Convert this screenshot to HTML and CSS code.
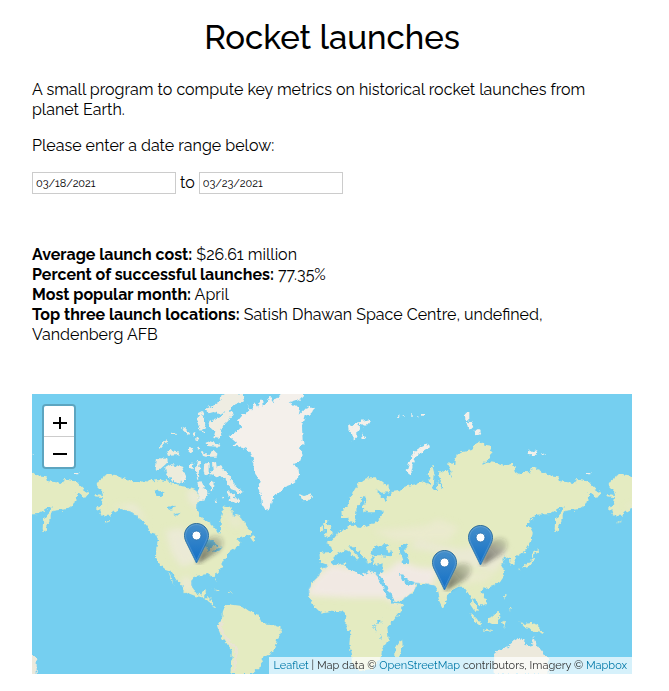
FILE: index.html
```html
<!DOCTYPE html>
<html lang="en">
<head>
<meta charset="utf-8">
<meta name="viewport" content="width=device-width, initial-scale=1">
<title>Rocket launches</title>
<link rel="stylesheet" href="styles.css">
</head>
<body>
<main class="page">
  <h1 class="title">Rocket launches</h1>
  <p class="text">A small program to compute key metrics on historical rocket launches from planet Earth.</p>
  <p class="text">Please enter a date range below:</p>
  <form class="range">
    <input class="date" type="text" aria-label="Start date" value="03/18/2021">
    <span>to</span>
    <input class="date" type="text" aria-label="End date" value="03/23/2021">
  </form>
  <section class="metrics">
    <div><b>Average launch cost:</b> $26.61 million</div>
    <div><b>Percent of successful launches:</b> 77.35%</div>
    <div><b>Most popular month:</b> April</div>
    <div><b>Top three launch locations:</b> Satish Dhawan Space Centre, undefined, Vandenberg AFB</div>
  </section>
  <section class="map" aria-label="Launch map">
    <svg class="world" viewBox="0 0 1800 840" preserveAspectRatio="xMidYMid slice" aria-hidden="true">
      <defs>
        <filter id="soft" x="-20%" y="-20%" width="140%" height="140%"><feGaussianBlur stdDeviation="9"/></filter>
        <filter id="rough" x="0" y="0" width="100%" height="100%" color-interpolation-filters="sRGB"><feTurbulence type="fractalNoise" baseFrequency="0.08" numOctaves="3" seed="4"/><feDisplacementMap in="SourceGraphic" scale="16" xChannelSelector="R" yChannelSelector="G"/></filter>
        <clipPath id="eurasia-clip"><use href="#eurasia-shape"/></clipPath>
        <clipPath id="america-clip"><use href="#america-shape"/></clipPath>
        <path id="america-shape" d="M187 300L213 303 210 295 192 275 205 255 230 242 262 248 290 257 320 268 330 262 340 268 355 255 362 262 385 257 405 262 430 268 450 280 470 282 495 290 502 320 495 330 495 350 505 368 520 378 540 392 550 405 562 422 567 400 565 380 572 365 572 345 568 335 588 340 602 352 602 365 612 360 622 363 630 378 640 388 648 405 660 412 655 422 630 428 612 440 625 440 622 455 605 465 588 478 582 490 574 500 570 515 562 528 550 540 548 550 556 565 552 560 542 546 525 540 508 543 490 545 480 558 481 580 493 598 508 602 512 592 526 588 520 602 514 612 542 614 543 632 552 642 540 636 530 622 512 610 490 606 460 594 450 575 438 560 420 535 400 528 384 515 372 490 373 460 378 440 372 420 355 415 345 395 325 375 300 357 280 348 262 345 245 355 235 365 217 365 205 360 208 353 195 345 210 325 213 310 190 307Z"/>
        <path id="eurasia-shape" d="M928 350L945 340 952 320 960 300 972 280 982 268 1005 250 1028 250 1050 262 1073 280 1072 295 1050 297 1034 286 1042 304 1054 314 1058 325 1065 310 1076 305 1080 294 1104 290 1118 278 1140 272 1160 268 1172 262 1182 270 1195 272 1190 238 1202 215 1208 240 1204 290 1216 290 1214 262 1222 265 1232 285 1238 282 1226 262 1218 235 1230 235 1245 225 1258 255 1258 232 1245 208 1270 210 1272 185 1290 172 1320 165 1340 140 1355 152 1375 155 1382 170 1370 195 1350 213 1370 205 1400 208 1425 215 1440 208 1448 220 1455 243 1472 234 1495 235 1500 220 1525 228 1545 243 1580 247 1585 262 1630 268 1635 255 1665 262 1688 285 1707 298 1695 312 1675 295 1668 310 1663 330 1640 345 1600 350 1592 362 1592 375 1572 415 1568 402 1570 375 1592 348 1595 340 1585 342 1555 360 1510 362 1490 385 1482 398 1494 400 1502 415 1498 440 1480 470 1460 485 1448 483 1448 512 1436 512 1434 495 1424 490 1420 486 1410 495 1414 506 1405 510 1414 525 1417 545 1404 565 1382 577 1360 582 1348 590 1352 602 1365 620 1363 630 1345 636 1330 618 1320 612 1326 625 1338 650 1330 650 1318 632 1316 610 1305 592 1295 578 1280 578 1266 585 1245 604 1244 622 1232 642 1222 622 1215 592 1213 580 1204 574 1185 568 1150 567 1140 564 1152 574 1147 588 1132 602 1105 620 1086 624 1090 630 1114 630 1108 648 1084 680 1066 700 1070 738 1050 765 1047 790 1020 825 980 832 960 800 952 750 955 720 940 690 943 662 930 652 900 650 866 656 845 635 832 610 830 585 845 562 862 545 868 525 890 514 865 505 862 476 900 474 898 456 883 446 900 440 918 418 940 405 948 396 965 395 990 400 1030 386 1048 370 1052 350 1034 346 1028 355 1010 355 994 352 992 335 1006 318 1002 302 988 308 986 326 974 340 972 368 962 388 952 384 948 368 930 370Z"/>
        <path id="south" d="M570 670L575 643 590 630 602 632 630 636 650 650 678 662 690 688 715 690 742 700 750 712 735 735 730 765 715 778 695 788 685 818 660 840 595 840 600 768 585 750 568 728 555 695Z"/>
        <g id="eurasia">
          <g filter="url(#rough)">
            <use href="#eurasia-shape" fill="#e4ebc1"/>
          </g>
          <g clip-path="url(#eurasia-clip)">
            <g filter="url(#soft)">
              <path fill="#f1e9e3" d="M820 605L850 550 900 510 940 520 1060 535 1100 500 1160 520 1220 525 1200 575 1140 615 1090 630 1060 612 960 612Z"/>
              <path fill="#efe8df" d="M1130 460L1210 475 1250 500 1390 535 1430 470 1370 450 1290 465 1160 440Z" opacity=".6"/>
              <path fill="#ece9d3" d="M1020 410L1180 395 1220 375 1280 400 1250 440 1090 440ZM1300 530L1390 540 1360 560 1290 570ZM1210 560L1240 570 1240 620Z" opacity=".7"/>
            </g>
          </g>
          <g filter="url(#rough)" fill="#75cff0">
            <path d="M898 508L910 482 940 467 950 472 964 486 975 500 978 488 961 470 948 455 958 454 980 474 995 490 1008 506 1020 500 1016 486 1032 490 1020 506 1024 514 1055 508 1054 530 1040 542 1012 532 990 544 975 535 945 526 938 508 905 514Z"/>
            <path d="M1018 484L1022 464 1036 452 1048 460 1058 450 1072 452 1062 466 1080 478 1076 487 1050 484 1036 484Z"/>
            <path d="M1100 460L1122 448 1128 454 1118 472 1128 486 1132 506 1114 508 1108 490Z"/>
            <path d="M1033 540L1042 542 1064 575 1084 610 1088 625 1112 626 1114 632 1086 630 1070 615 1050 575Z"/>
            <path d="M1103 540L1112 542 1122 556 1148 564 1144 572 1126 572 1112 560Z"/>
            <path d="M1036 680L1048 674 1048 686 1036 690ZM1024 690L1032 712 1034 716 1024 700ZM1046 716L1050 738 1044 732Z"/>
          </g>
          <g filter="url(#rough)" fill="#e4ebc1">
            <path d="M878 378L886 378 884 390 896 402 904 420 890 428 876 424 884 412 876 398ZM864 398L872 394 874 412 864 418Z"/>
            <path d="M1110 735L1112 752 1102 790 1090 788 1090 762Z"/>
            <path d="M1312 656L1330 668 1346 690 1348 698 1332 686ZM1368 672L1384 665 1400 652 1402 668 1396 690 1380 690 1368 684ZM1352 706L1382 711 1382 714 1352 709ZM1410 684L1422 680 1416 700ZM1416 600L1422 602 1418 618ZM1432 642L1438 642 1434 650Z"/>
            <path d="M1470 520L1484 508 1498 500 1504 472 1516 466 1518 474 1508 480 1502 506 1492 516 1474 522ZM1456 524L1464 524 1460 532Z"/>
            <path d="M1462 682L1476 690 1500 686 1520 698 1536 718 1520 712 1508 718 1492 702 1476 698Z"/>
          </g>
          <g filter="url(#rough)">
            <path fill="#ece9dc" d="M1388 840L1386 780 1400 768 1426 760 1444 742 1460 732 1478 736 1476 748 1494 758 1502 746 1506 728 1514 752 1530 772 1550 798 1550 840Z"/>
            <path fill="#f3f0ea" d="M948 92L962 100 972 86 980 84 984 98 976 110 976 128 966 140 960 120 950 108ZM980 82L1010 76 1014 86 1002 98 986 92ZM990 118L1000 132 992 134ZM1190 148L1194 160 1160 180 1150 192 1142 214 1138 234 1140 244 1124 232 1130 212 1140 182 1160 162ZM1298 56L1312 56 1312 80 1300 76ZM1304 88L1316 80 1324 100 1308 104ZM1328 112L1342 104 1348 118 1330 124ZM1486 166L1500 174 1516 172 1514 182 1492 184ZM1528 178L1542 181 1530 183ZM1098 64H1102V70H1098ZM1112 64H1118V68H1112ZM1138 60H1142V66H1138ZM1156 66H1164V70H1156ZM1170 60H1176V65H1170ZM1665 237H1678V241H1665Z"/>
          </g>
        </g>
        <g id="america">
          <use href="#america-shape" fill="#e4ebc1" filter="url(#rough)"/>
          <g clip-path="url(#america-clip)" filter="url(#soft)">
            <path fill="#eee9de" d="M400 410L450 400 490 460 500 500 450 520 420 480ZM465 285L505 290 500 350 470 320ZM240 335L310 330 350 390 300 350ZM450 550L475 550 480 600 450 580Z" opacity=".7"/>
            <path fill="#ece9d8" d="M575 350L620 370 640 395 600 400Z" opacity=".5"/>
          </g>
          <g filter="url(#rough)">
            <use href="#south" fill="#e4ebc1"/>
            <path fill="#75cff0" d="M366 294L382 288 398 296 384 310 370 304ZM404 340L432 332 422 346 408 348ZM424 362L446 356 432 368ZM520 440L540 438 560 454 556 458 542 452 534 470 526 474ZM544 466L572 460 562 470 544 474Z"/>
            <path fill="#e4ebc1" d="M654 432L664 422 668 436 660 441ZM408 530L418 552 428 574 414 550ZM538 584L568 592 560 594ZM592 593L604 595 592 597ZM216 388L234 376 230 384Z"/>
            <path fill="none" stroke="#e9e4d3" stroke-width="8" d="M572 680L562 700 590 742 614 764 606 830"/>
            <path fill="#ececdc" d="M372 192L402 194 406 206 384 226 368 230ZM382 158L400 138 402 144 388 162ZM404 174L416 166 430 178 444 172 446 182 408 186ZM420 116H430V122H420ZM400 222L420 210 450 218 458 238 450 258 438 266 420 258 404 240ZM450 242L462 250 458 262 448 258Z"/>
            <path fill="#efede2" d="M518 44L536 38 556 26 568 6 590 -6 632 0 636 22 620 30 600 38 590 52 606 54 598 68 588 82 574 94 566 112 572 126 560 134 544 132 550 112 534 98 546 76 566 66 580 54 562 60 548 54 534 58ZM498 60L510 54 518 74 520 94 512 116 502 106 496 88ZM534 78L548 90 550 102 536 104 530 92ZM524 146L536 142 550 150 564 148 560 158 526 156ZM506 168L518 176 532 180 546 170 556 178 554 188 524 188 510 184ZM450 98L460 102 472 116 468 124 456 112ZM482 118H490V126H482ZM490 130L500 134 498 140 490 136ZM496 160L504 158 504 168 494 166ZM472 156L484 168 476 180 470 170ZM474 206L484 206 482 226 474 222ZM450 232L458 244 462 254 454 266 448 262ZM494 202L504 200 502 222 500 236 502 256 494 250 492 228ZM520 204L530 204 530 238 524 246 518 232ZM540 206L552 204 554 218 568 214 572 226 584 236 594 246 602 258 606 270 618 280 632 294 626 300 612 290 598 286 586 272 578 256 566 244 550 248 540 244 534 250 532 240 542 228ZM496 264L508 262 516 270 514 282 524 288 530 298 522 306 518 318 506 322 498 308 500 290ZM538 260L548 264 546 284 538 290 534 276ZM590 290L602 300 618 318 622 326 612 328 598 320 590 322 592 308 586 300ZM548 316L556 322 550 328ZM570 302L578 310 572 314Z"/>
            <path fill="#f4f0eb" d="M632 60L655 50 640 28 660 50 667 25 675 38 690 12 692 35 705 28 712 8 725 28 732 8 745 18 740 -8H812V12L770 25 805 42 800 62 822 40 848 42 835 60 818 66 810 95 812 140 818 145 803 160 812 180 805 200 790 205 785 215 800 225 802 245 790 262 775 272 755 280 750 292 730 300 720 320 712 345 700 347 690 330 685 300 678 285 686 262 670 240 668 215 658 180 645 165 630 158 605 155 615 145 592 125 615 112 628 100 615 80Z"/>
            <path fill="#efeede" d="M804 300L818 306 836 298 840 310 830 320 812 322 808 312Z"/>
          </g>
        </g>
      </defs>
      <rect width="1800" height="840" fill="#75cff0"/>
      <use href="#eurasia"/>
      <use href="#eurasia" x="-1536"/>
      <use href="#america"/>
      <use href="#america" x="1536"/>
    </svg>

    <svg class="marker marker-us" viewBox="0 0 48 42" role="img" aria-label="Launch site"><use href="#pin"/></svg>
    <svg class="marker marker-china" viewBox="0 0 48 42" role="img" aria-label="Launch site"><use href="#pin"/></svg>
    <svg class="marker marker-india" viewBox="0 0 48 42" role="img" aria-label="Launch site"><use href="#pin"/></svg>
    <svg class="symbols" aria-hidden="true">
      <defs>
        <linearGradient id="pin-blue" x1="0" y1="0" x2="0" y2="1"><stop offset="0" stop-color="#468fca"/><stop offset="1" stop-color="#126fc6"/></linearGradient>
        <linearGradient id="pin-edge" x1="0" y1="0" x2="0" y2="1"><stop offset="0" stop-color="#2e6c97"/><stop offset="1" stop-color="#3883b7"/></linearGradient>
        <linearGradient id="shade-fill" x1="0" y1="1" x2="1" y2="0"><stop offset="0" stop-color="#222" stop-opacity=".65"/><stop offset="1" stop-color="#222" stop-opacity=".1"/></linearGradient>
        <filter id="shade" x="-30%" y="-30%" width="160%" height="160%"><feGaussianBlur stdDeviation="2"/></filter>
        <g id="pin">
          <path d="M13 41L18 22Q27 10 37 14 43 20 34 29Z" fill="url(#shade-fill)" filter="url(#shade)"/>
          <path d="M12.500 .5C5.800 .5 .5 5.900 .5 12.500c0 2.600 .8 4.800 2 7.200L12.500 40l10-20.300c1.200-2.400 2-4.600 2-7.200C24.500 5.900 19.200 .5 12.500 .5Z" fill="url(#pin-blue)" stroke="url(#pin-edge)"/>
          <path d="M12.500 1.600C6.500 1.600 1.600 6.500 1.600 12.500c0 2.400 .7 4.400 1.900 6.700L12.500 37.500l9-18.300c1.200-2.300 1.900-4.300 1.900-6.700C23.400 6.500 18.500 1.600 12.500 1.600Z" fill="none" stroke="#fff" stroke-opacity=".15"/>
          <circle cx="12.500" cy="12.500" r="4.500" fill="#fff" stroke="#2f78b5"/>
        </g>
      </defs>
    </svg>

    <div class="zoom">
      <button class="zoom-button" type="button" aria-label="Zoom in"><svg width="14" height="14" viewBox="0 0 14 14"><path d="M7 1V13M0 7H14"/></svg></button>
      <button class="zoom-button" type="button" aria-label="Zoom out"><svg width="14" height="14" viewBox="0 0 14 14"><path d="M0 7H14"/></svg></button>
    </div>
    <div class="attribution"><a href="#leaflet">Leaflet</a> | Map data © <a href="#osm">OpenStreetMap</a> contributors, Imagery © <a href="#mapbox">Mapbox</a></div>
  </section>
</main>
</body>
</html>
```

FILE: styles.css
```css
body {
  margin: 0;
  background: #fff;
  color: #000;
  font: 16px/20px Raleway, Lato, sans-serif;
}

.page {
  max-width: 600px;
  margin: 0 32px;
  padding: 18px 0;
}

.title {
  margin: 0 0 22px;
  font-size: 33px;
  line-height: 40px;
  font-weight: 500;
  text-align: center;
}

.text {
  margin: 0 0 16px;
}

.range {
  display: flex;
  align-items: center;
  gap: 4px;
}

.date {
  box-sizing: border-box;
  width: 144px;
  height: 22px;
  padding: 0 3px;
  border: 1px solid #ccc;
  background: #fff;
  color: #000;
  font: 11px Raleway, Lato, sans-serif;
}

.metrics {
  margin: 51px 0 49px;
}

.map {
  position: relative;
  height: 280px;
  overflow: hidden;
  background: #75cff0;
}

.world {
  display: block;
  width: 100%;
  height: 100%;
}

.symbols {
  position: absolute;
  width: 0;
  height: 0;
}

.marker {
  position: absolute;
  width: 48px;
  height: 42px;
}

.marker-us {
  left: 152px;
  top: 129px;
}

.marker-china {
  left: 436px;
  top: 131px;
}

.marker-india {
  left: 400px;
  top: 156px;
}

.zoom {
  position: absolute;
  left: 10px;
  top: 10px;
  border: 2px solid rgba(0, 0, 0, 0.2);
  border-radius: 4px;
  background-clip: padding-box;
}

.zoom-button {
  display: flex;
  box-sizing: border-box;
  align-items: center;
  justify-content: center;
  width: 30px;
  height: 30px;
  padding: 3px 0 0 2px;
  border: 0;
  background: #fff;
}

.zoom-button:first-child {
  height: 31px;
  border-bottom: 1px solid #ccc;
  border-radius: 2px 2px 0 0;
}

.zoom-button:last-child {
  border-radius: 0 0 2px 2px;
}

.zoom-button path {
  fill: none;
  stroke: #000;
  stroke-width: 2;
}

.attribution {
  position: absolute;
  right: 0;
  bottom: 0;
  padding: 0 5px;
  background: rgba(255, 255, 255, 0.7);
  color: #333;
  font-size: 11px;
  line-height: 17px;
  white-space: nowrap;
}

.attribution a {
  color: #0078a8;
  text-decoration: none;
}
```
